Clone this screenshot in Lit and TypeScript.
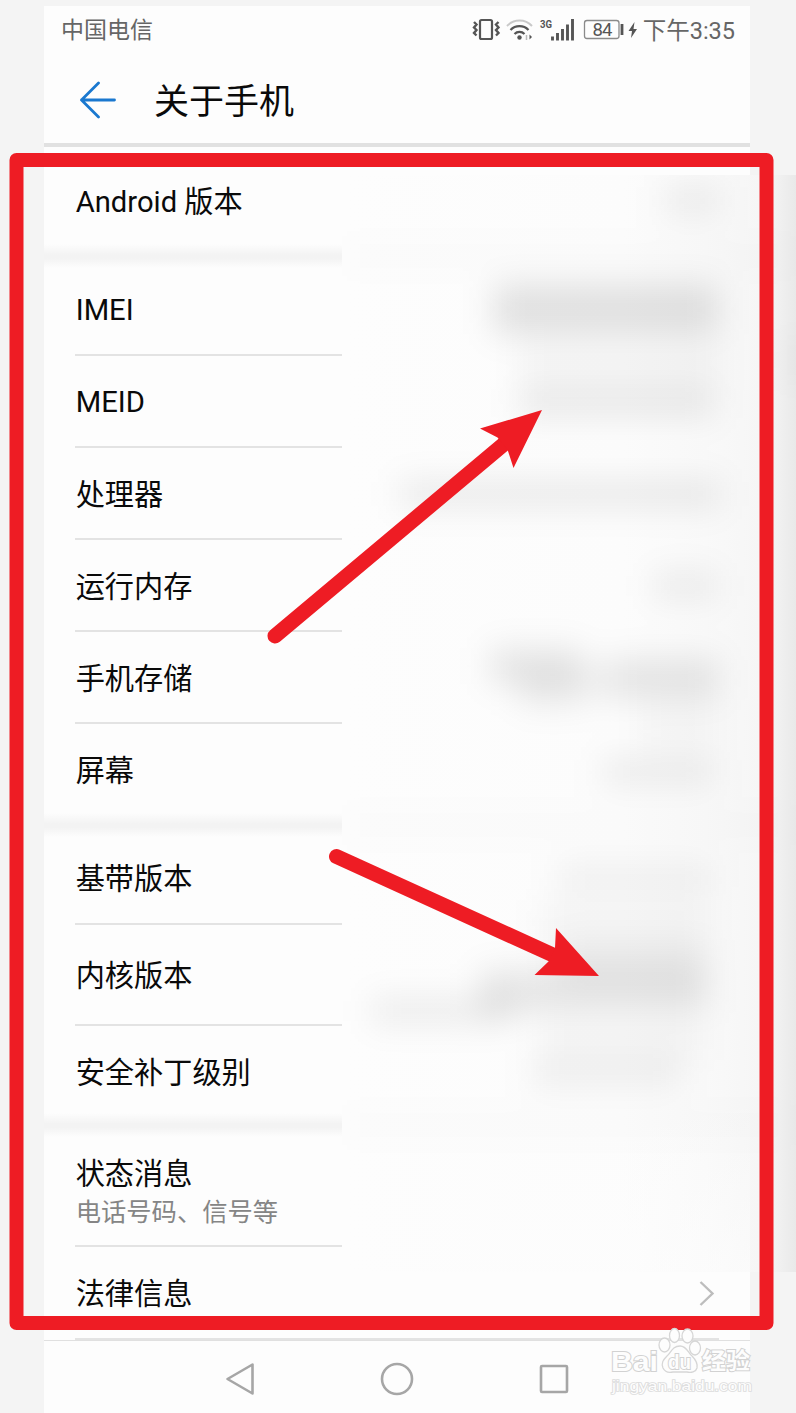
import { LitElement, html, css, svg, nothing } from "lit";
import { customElement } from "lit/decorators.js";
import { classMap } from "lit/directives/class-map.js";

interface Row {
  label: string;
  kind: string;
  sub?: string;
  arrow?: boolean;
  line?: boolean;
}

const GROUPS: Row[][] = [
  [{ label: "Android 版本", kind: "first" }],
  [
    { label: "IMEI", kind: "lead", line: true },
    { label: "MEID", kind: "second", line: true },
    { label: "处理器", kind: "mid", line: true },
    { label: "运行内存", kind: "mid", line: true },
    { label: "手机存储", kind: "mid", line: true },
    { label: "屏幕", kind: "last" },
  ],
  [
    { label: "基带版本", kind: "lead", line: true },
    { label: "内核版本", kind: "tall", line: true },
    { label: "安全补丁级别", kind: "patch" },
  ],
  [
    { label: "状态消息", kind: "status", sub: "电话号码、信号等", line: true },
    { label: "法律信息", kind: "legal", arrow: true },
  ],
];

// Smudges that hide the values: x, y, width, height, darkness
const SMUDGES: number[][] = [
  [664, 186, 56, 30, 0.06],
  [494, 284, 224, 50, 0.11],
  [520, 388, 194, 30, 0.075],
  [400, 480, 320, 28, 0.075],
  [654, 573, 62, 26, 0.065],
  [490, 648, 90, 36, 0.09],
  [520, 672, 60, 34, 0.07],
  [580, 660, 138, 40, 0.05],
  [612, 656, 106, 42, 0.045],
  [602, 758, 112, 28, 0.065],
  [558, 864, 154, 26, 0.055],
  [540, 900, 168, 40, 0.03],
  [556, 940, 150, 40, 0.07],
  [480, 970, 226, 42, 0.09],
  [372, 998, 140, 26, 0.07],
  [532, 1058, 148, 30, 0.055],
  [520, 340, 200, 50, 0.03],
  [640, 700, 76, 50, 0.025],
  [540, 1020, 160, 40, 0.03],
];

@customElement("status-bar")
class StatusBar extends LitElement {
  static styles = css`
    :host {
      display: flex;
      justify-content: space-between;
      height: 50px;
      padding: 0 15px 0 17px;
      color: #666;
      font: 23px/50px Roboto, "Noto Sans CJK SC", sans-serif;
    }
    .right {
      display: flex;
    }
    .icons {
      display: block;
      width: 172px;
      height: 50px;
    }
    .net {
      font: 700 11px Roboto, sans-serif;
      fill: #555;
    }
    .charge {
      font: 18.500px Roboto, sans-serif;
      fill: #555;
    }
    .time {
      font-size: 23.5px;
    }
  `;
  render() {
    return html`
      <span>中国电信</span>
      <div class="right">
        <svg class="icons" viewBox="471 6 172 50" fill="none" stroke="#555">
          <rect x="480" y="20" width="12" height="19" rx="1.5" stroke-width="2.200" />
          <path
            d="M474 22l2.5 2.5-2.5 3 2.5 2.5-2.5 3 2.5 2.5M498.500 22l-2.500 2.500 2.500 3-2.500 2.500 2.500 3-2.500 2.500"
            stroke-width="2.400"
          />
          <path d="M507 26a17 17 0 0 1 25 0" stroke="#c9c9c9" stroke-width="2" />
          <path d="M510.500 30a12.500 12.500 0 0 1 18 0M514.500 34a7 7 0 0 1 10 0" stroke-width="2.200" />
          <circle cx="519.500" cy="37.500" r="2.200" fill="#555" stroke="none" />
          <path d="M526.500 35v5" stroke="#bbb" stroke-width="1.500" />
          <path d="M529.500 34.500v5l2.500-2.500z" fill="#555" stroke="none" />
          <text class="net" stroke="none" x="540" y="27.500" textLength="12" lengthAdjust="spacingAndGlyphs">3G</text>
          <path d="M552.500 36.500v4M557.500 33v7.500M562.500 29v11.500M567.500 24.500v16M572.500 19v21.500" stroke-width="2.900" />
          <rect x="584.500" y="20.500" width="34.500" height="18" rx="2.500" stroke="#8a8a8a" stroke-width="1.300" />
          <path d="M622 24v11" stroke-width="2.800" />
          <text class="charge" stroke="none" x="592.500" y="36" textLength="20">84</text>
          <path d="M634.500 22l-6 9h3.500l-1 7 6-9h-3.500z" fill="#555" stroke="none" />
        </svg>
        <span class="time">下午3:35</span>
      </div>
    `;
  }
}

@customElement("info-row")
class InfoRow extends LitElement {
  static properties = { row: { attribute: false } };
  declare row: Row;
  static styles = css`
    :host {
      display: block;
      padding-left: 31px;
      color: #0a0a0a;
      font: 29.200px/44px Roboto, "Noto Sans CJK SC", sans-serif;
    }
    .row {
      box-sizing: border-box;
      display: flex;
      justify-content: space-between;
      align-items: center;
    }
    .text {
      padding-left: 0.700px;
    }
    .line {
      width: 267px;
      border-bottom: 2px solid #e3e3e3;
    }
    .first { height: 97px; padding-top: 13px; }
    .lead { height: 88px; padding-bottom: 2px; }
    .second { height: 92px; padding-top: 1px; }
    .mid { height: 92px; padding-top: 3px; }
    .last { height: 89px; padding-top: 5px; }
    .tall { height: 101px; padding-top: 3px; }
    .patch { height: 87px; padding-top: 7px; }
    .status { height: 110px; }
    .legal { height: 91px; padding: 4px 35px 0 0; }
    .sub {
      color: #858585;
      font-size: 25.300px;
      line-height: 34px;
    }
    .arrow {
      width: 16px;
      height: 26px;
    }
  `;
  render() {
    const r = this.row;
    return html`
      <div class=${classMap({ row: true, line: !!r.line, [r.kind]: true })}>
        <div class="text">
          <div>${r.label}</div>
          ${r.sub ? html`<div class="sub">${r.sub}</div>` : nothing}
        </div>
        ${r.arrow
          ? html`<svg class="arrow" viewBox="0 0 16 26" fill="none" stroke="#bdbdbd" stroke-width="2.400">
              <path d="M1.500 1l12 11.500-12 11.500" />
            </svg>`
          : nothing}
      </div>
    `;
  }
}

@customElement("blur-patch")
class BlurPatch extends LitElement {
  static styles = css`
    :host,
    .art {
      display: block;
      width: 454px;
      height: 1097px;
    }
  `;
  render() {
    return html`
      <svg class="art" viewBox="342 175 454 1097">
        <defs>
          <linearGradient id="base">
            <stop offset="0" stop-color="#fdfdfd" />
            <stop offset="0.620" stop-color="#fcfcfc" />
            <stop offset="0.800" stop-color="#f9f9f9" />
            <stop offset="0.920" stop-color="#f6f6f6" />
            <stop offset="0.960" stop-color="#f1f1f1" />
            <stop offset="1" stop-color="#e9e9e9" />
          </linearGradient>
          <linearGradient id="low" x1="0" x2="0" y1="0" y2="1">
            <stop offset="0" stop-color="#fdfdfd" stop-opacity="0" />
            <stop offset="1" stop-color="#fdfdfd" stop-opacity="0.600" />
          </linearGradient>
          <filter id="soft" filterUnits="userSpaceOnUse" x="280" y="100" width="580" height="1240" color-interpolation-filters="sRGB">
            <feGaussianBlur stdDeviation="16" />
          </filter>
        </defs>
        <rect x="342" y="175" width="454" height="1097" fill="url(#base)" />
        <rect x="342" y="1090" width="408" height="182" fill="url(#low)" />
        <g filter="url(#soft)">
          ${SMUDGES.map(
            ([x, y, w, h, a]) => svg`<rect x=${x} y=${y} width=${w} height=${h} fill="#000" fill-opacity=${a} />`
          )}
          <rect x="342" y="246" width="454" height="20" fill="#000" fill-opacity="0.016" />
          <rect x="342" y="815" width="454" height="20" fill="#000" fill-opacity="0.016" />
          <rect x="342" y="1115" width="454" height="20" fill="#000" fill-opacity="0.016" />
          <rect x="792" y="340" width="8" height="40" fill="#000" fill-opacity="0.080" />
        </g>
      </svg>
    `;
  }
}

@customElement("red-marks")
class RedMarks extends LitElement {
  static styles = css`
    :host,
    .art {
      display: block;
      width: 796px;
      height: 1413px;
    }
    .mark-cn,
    .mark-en {
      fill: #fdfdfd;
      stroke: #d2d2d2;
      stroke-width: 2px;
      paint-order: stroke;
      font-family: "Liberation Sans", "Noto Sans CJK SC", sans-serif;
    }
    .mark-cn {
      font-size: 28px;
      font-weight: 700;
    }
    .cn {
      font-family: "Noto Sans CJK SC", sans-serif;
      font-size: 23px;
    }
    .mark-du { font-size: 20px; }
    .mark-en { font-size: 14.500px; stroke: #dcdcdc; stroke-width: 1.600px; }
  `;
  render() {
    return html`
      <svg class="art" viewBox="0 0 796 1413">
        <rect x="16.500" y="160" width="750" height="1163" fill="none" stroke="#ee1c24" stroke-width="14" stroke-linejoin="round" />
        <g fill="#ee1c24">
          <path d="M275 636L504 444" stroke="#ee1c24" stroke-width="15" stroke-linecap="round" />
          <path d="M542 410L480 428.500 497.500 437.500 507.500 449.500 513.500 468z" />
          <path d="M336.500 856.500L553 955" stroke="#ee1c24" stroke-width="15" stroke-linecap="round" />
          <path d="M599 976L556 928 555 948 548.500 961.500 534.500 975z" />
        </g>
        <g fill="#fdfdfd" stroke="#d6d6d6" stroke-width="1.300">
          <ellipse cx="664.500" cy="1345" rx="5.500" ry="7" />
          <ellipse cx="674.500" cy="1335.500" rx="5" ry="7" />
          <ellipse cx="687.500" cy="1336" rx="5.500" ry="7" />
          <ellipse cx="695" cy="1348" rx="5.500" ry="7" />
          <path d="M680 1346c-8 0-9 7-13 10-4 4-6 7-4 12 2 4 6 5 10 4h14c4 1 9 0 10-4 1-5-1-8-5-12-4-3-5-10-12-10z" />
        </g>
        <text class="mark-cn" x="611" y="1370.500" textLength="47" lengthAdjust="spacingAndGlyphs">Bai</text>
        <text class="mark-cn mark-du" x="668" y="1369" textLength="23" lengthAdjust="spacingAndGlyphs">du</text>
        <text class="mark-cn cn" x="702" y="1369" textLength="48" lengthAdjust="spacingAndGlyphs">经验</text>
        <text class="mark-en" x="612" y="1391" textLength="140" lengthAdjust="spacingAndGlyphs">jingyan.baidu.com</text>
      </svg>
    `;
  }
}

@customElement("app-root")
class AppRoot extends LitElement {
  static styles = css`
    :host {
      display: block;
      position: relative;
      box-sizing: border-box;
      width: 796px;
      height: 1413px;
      padding: 6px 46px 0 44px;
      overflow: hidden;
      background: #f4f4f4;
    }
    .phone {
      display: flex;
      flex-direction: column;
      height: 1407px;
      background: #fdfdfd;
    }
    .title {
      box-sizing: border-box;
      display: flex;
      align-items: center;
      gap: 37px;
      height: 92px;
      padding: 1px 0 0 36px;
      border-bottom: 4px solid #e1e1e1;
      color: #0a0a0a;
      font: 35px/52px Roboto, "Noto Sans CJK SC", sans-serif;
    }
    .name {
      padding-top: 6px;
    }
    .back {
      width: 37px;
      height: 38px;
    }
    .band {
      height: 24px;
      background: linear-gradient(#fdfdfd, #f3f3f3 45%, #f3f3f3 60%, #fdfdfd);
    }
    .foot {
      height: 2px;
      margin: 0 31px;
      background: #e3e3e3;
    }
    .nav {
      flex: 1;
      border-top: 1px solid #e0e0e0;
    }
    .keys {
      display: block;
      width: 706px;
      height: 72px;
    }
    .patch {
      position: absolute;
      left: 342px;
      top: 175px;
    }
    .marks {
      position: absolute;
      left: 0;
      top: 0;
    }
  `;
  render() {
    return html`
      <div class="phone">
        <status-bar></status-bar>
        <div class="title">
          <svg class="back" viewBox="0 0 37 38" fill="none" stroke="#1a78cf" stroke-width="2.800" stroke-linecap="round" stroke-linejoin="round">
            <path d="M18.500 2L1.500 19l17 17M1.500 19h33" />
          </svg>
          <span class="name">关于手机</span>
        </div>
        ${GROUPS.map(
          (g, i) => html`${i ? html`<div class="band"></div>` : nothing}
          ${g.map((r) => html`<info-row .row=${r}></info-row>`)}`
        )}
        <div class="foot"></div>
        <div class="nav">
          <svg class="keys" viewBox="44 1341 706 72" fill="none" stroke="#a6a6a6" stroke-width="2.600" stroke-linejoin="round">
            <path d="M252.500 1364.500v29l-25-14.500z" />
            <circle cx="397" cy="1379" r="15" />
            <rect x="541" y="1366" width="26" height="26" rx="1" />
          </svg>
        </div>
      </div>
      <blur-patch class="patch"></blur-patch>
      <red-marks class="marks"></red-marks>
    `;
  }
}
